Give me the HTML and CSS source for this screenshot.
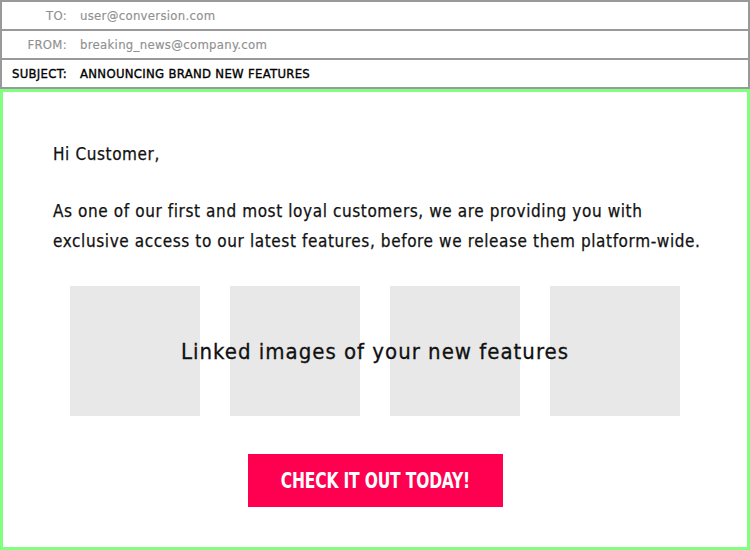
FILE: index.html
```html
<!DOCTYPE html>
<html>
<head>
<meta charset="utf-8">
<link rel="stylesheet" href="styles.css">
</head>
<body>
<div class="headers">
  <div class="hrow"><span class="label">TO:</span><span class="value">user@conversion.com</span></div>
  <div class="hrow"><span class="label">FROM:</span><span class="value">breaking_news@company.com</span></div>
  <div class="hrow subject"><span class="label">SUBJECT:</span><span class="value">ANNOUNCING BRAND NEW FEATURES</span></div>
</div>
<div class="email">
  <p class="greeting">Hi Customer,</p>
  <p class="intro">As one of our first and most loyal customers, we are providing you with exclusive access to our latest features, before we release them platform-wide.</p>
  <div class="gallery">
    <div class="tiles">
      <div class="tile"></div>
      <div class="tile"></div>
      <div class="tile"></div>
      <div class="tile"></div>
    </div>
    <div class="caption">Linked images of your new features</div>
  </div>
  <div class="cta-wrap"><a class="cta"><span class="cta-text">CHECK IT OUT TODAY!</span></a></div>
</div>
</body>
</html>
```
FILE: styles.css
```css
* { box-sizing: border-box; }
html, body { margin: 0; padding: 0; background: #fff; }
body {
  width: 750px;
  height: 550px;
  font-family: "DejaVu Sans Condensed", "DejaVu Sans", sans-serif;
  color: #111;
}
.headers {
  border: 2px solid #999;
  border-bottom: none;
}
.hrow {
  display: flex;
  align-items: center;
  height: 29px;
  border-bottom: 2px solid #999;
  font-size: 13px;
  letter-spacing: 0.3px;
  color: #909090;
  -webkit-text-stroke: 0.15px #909090;
}
.label {
  width: 65px;
  text-align: right;
  margin-right: 13px;
}
.subject { color: #000; -webkit-text-stroke: 0.35px #000; }
.email {
  height: 461px;
  border: 3px solid #80ff80;
  padding: 47px 40px 0 50px;
  display: flex;
  flex-direction: column;
}
.greeting, .intro {
  margin: 0;
  font-size: 17px;
  line-height: 30px;
  letter-spacing: 0.6px;
  -webkit-text-stroke: 0.25px #111;
}
.intro { margin-top: 27px; }
.gallery {
  position: relative;
  margin-top: 30px;
  margin-right: 10px;
}
.tiles {
  display: flex;
  justify-content: center;
  gap: 30px;
}
.tile {
  width: 130px;
  height: 130px;
  background: #e8e8e8;
}
.caption {
  position: absolute;
  left: 0; right: 0; top: 0; bottom: 0;
  display: flex;
  align-items: center;
  justify-content: center;
  font-size: 22px;
  letter-spacing: 1px;
  color: #111;
  -webkit-text-stroke: 0.3px #111;
}
.cta-wrap {
  display: flex;
  justify-content: center;
  margin-top: 38px;
  margin-right: 10px;
}
.cta {
  width: 255px;
  height: 53px;
  background: #ff0050;
  color: #fff;
  display: flex;
  align-items: center;
  justify-content: center;
}
.cta-text {
  display: inline-block;
  white-space: nowrap;
  font-size: 21px;
  font-weight: bold;
  letter-spacing: -0.2px;
  transform: scaleX(0.82);
}
```
